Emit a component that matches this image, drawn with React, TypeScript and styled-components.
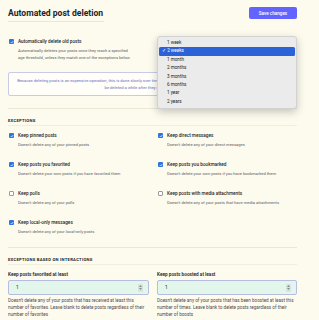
import React from 'react';
import styled, { createGlobalStyle } from 'styled-components';

const GlobalStyle = createGlobalStyle`
  html, body {
    margin: 0;
    padding: 0;
    background: #fdfbee;
  }
  body {
    font-family: Roboto, "Liberation Sans", sans-serif;
    color: #222;
  }
`;

const Page = styled.div`
  width: 289px;
  padding: 6px 0 0 8px;
`;

const Header = styled.header`
  display: flex;
  justify-content: space-between;
  align-items: flex-start;
  margin-bottom: 16px;
`;

const Title = styled.h2`
  margin: 0;
  padding: 2px 1px 3px 0;
  font-size: 8.6px;
  line-height: 10px;
  font-weight: 700;
  color: #1e1f2a;
  border-bottom: 1px solid #ebe8d6;
`;

const SaveButton = styled.button`
  margin-top: 1px;
  width: 48px;
  height: 12px;
  padding: 0;
  border: none;
  border-radius: 2px;
  background: #6364ff;
  color: #fff;
  font-family: inherit;
  font-size: 4.6px;
  font-weight: 500;
`;

const Row = styled.div`
  position: relative;
  display: grid;
  grid-template-columns: 141px 140px;
  column-gap: 8px;
  row-gap: 13px;
`;

const Field = styled.div`
  display: flex;
  flex-direction: column;
`;

const CheckLine = styled.label`
  display: flex;
  align-items: center;
  gap: 4px;
  padding-left: 1px;
  font-size: 4.7px;
  line-height: 7px;
  font-weight: 500;
  color: #1e1f2a;
`;

const Box = styled.span<{ $checked?: boolean }>`
  flex: none;
  width: 5px;
  height: 5px;
  box-sizing: border-box;
  border-radius: 1px;
  display: flex;
  align-items: center;
  justify-content: center;
  background: ${(p) => (p.$checked ? '#2f74e2' : '#fff')};
  border: ${(p) => (p.$checked ? 'none' : '0.6px solid #9a9a9a')};
`;

const Hint = styled.div`
  margin-top: 2px;
  padding-left: 10px;
  font-size: 4.1px;
  line-height: 7px;
  color: #5c5c66;
`;

const InfoBox = styled.div`
  margin-top: 11px;
  padding: 4px 6px 4px;
  border: 1px solid #c9cae8;
  border-radius: 2px;
  background: #fffef9;
  color: #6a6fc2;
  font-size: 4.1px;
  line-height: 7px;
  text-align: center;
`;

const Divider = styled.hr`
  margin: 12px 0 0;
  border: none;
  border-top: 1px solid #ebe8d6;
`;

const SectionTitle = styled.h4`
  margin: 8px 0 6px;
  padding-bottom: 1px;
  font-size: 4.2px;
  line-height: 7px;
  font-weight: 700;
  letter-spacing: 0.25px;
  text-transform: uppercase;
  color: #1e1f2a;
  border-bottom: 1px solid #f0eedd;
`;

const Popup = styled.ul`
  position: absolute;
  top: -2px;
  left: 149px;
  width: 140px;
  margin: 0;
  padding: 2px 1px;
  list-style: none;
  box-sizing: border-box;
  background: #ebebeb;
  border: 0.5px solid #d2d2d2;
  border-radius: 3px;
  box-shadow: 0 3px 8px rgba(0, 0, 0, 0.22);
  z-index: 2;
`;

const Option = styled.li<{ $active?: boolean }>`
  height: 8.4px;
  line-height: 8.4px;
  padding-left: ${(p) => (p.$active ? '3px' : '8px')};
  border-radius: 1.5px;
  font-size: 4.6px;
  color: ${(p) => (p.$active ? '#fff' : '#222')};
  background: ${(p) => (p.$active ? '#2c62d7' : 'transparent')};
`;

const InputLabel = styled.div`
  font-size: 4.7px;
  line-height: 7px;
  font-weight: 600;
  color: #1e1f2a;
  margin-bottom: 2px;
`;

const NumberInput = styled.div`
  display: flex;
  align-items: center;
  justify-content: space-between;
  height: 15px;
  box-sizing: border-box;
  padding: 0 5px 0 7px;
  border: 1px solid #b7bde0;
  border-radius: 2px;
  background: #e2f6ec;
  font-size: 4.8px;
  color: #222;
`;

const Spinner = styled.span`
  display: flex;
  flex-direction: column;
  align-items: center;
  justify-content: center;
  gap: 1px;
  width: 5px;
  height: 8px;
  border-radius: 1px;
  background: #d6e4df;
`;

const InputHint = styled.div`
  margin-top: 2px;
  font-size: 4.6px;
  line-height: 7px;
  color: #4b4b55;
`;

const Tick = () => (
  <svg width="4" height="4" viewBox="0 0 10 10">
    <path d="M2 5.2 L4.2 7.4 L8.2 2.8" fill="none" stroke="#fff" strokeWidth="1.8" />
  </svg>
);

const Check = ({ checked, label, hint }: { checked?: boolean; label: string; hint: string }) => (
  <Field>
    <CheckLine>
      <Box $checked={checked}>{checked && <Tick />}</Box>
      {label}
    </CheckLine>
    <Hint>{hint}</Hint>
  </Field>
);

const ages = ['1 week', '2 weeks', '1 month', '2 months', '3 months', '6 months', '1 year', '2 years'];

const exceptions = [
  { checked: true, label: 'Keep pinned posts', hint: "Doesn't delete any of your pinned posts" },
  { checked: true, label: 'Keep direct messages', hint: "Doesn't delete any of your direct messages" },
  { checked: true, label: 'Keep posts you favorited', hint: "Doesn't delete your own posts if you have favorited them" },
  { checked: true, label: 'Keep posts you bookmarked', hint: "Doesn't delete your own posts if you have bookmarked them" },
  { checked: false, label: 'Keep polls', hint: "Doesn't delete any of your polls" },
  { checked: false, label: 'Keep posts with media attachments', hint: "Doesn't delete any of your posts that have media attachments" },
  { checked: true, label: 'Keep local-only messages', hint: "Doesn't delete any of your local-only posts" },
];

const Stepper = () => (
  <Spinner>
    <svg width="3" height="2" viewBox="0 0 6 4">
      <path d="M0 4 L3 0 L6 4 Z" fill="#8a8f96" />
    </svg>
    <svg width="3" height="2" viewBox="0 0 6 4">
      <path d="M0 0 L3 4 L6 0 Z" fill="#8a8f96" />
    </svg>
  </Spinner>
);

export default function App() {
  return (
    <>
      <GlobalStyle />
      <Page>
        <Header>
          <Title>Automated post deletion</Title>
          <SaveButton>Save changes</SaveButton>
        </Header>

        <Row>
          <Field>
            <CheckLine>
              <Box $checked>
                <Tick />
              </Box>
              Automatically delete old posts
            </CheckLine>
            <Hint>
              Automatically deletes your posts once they reach a specified
              <br />
              age threshold, unless they match one of the exceptions below
            </Hint>
          </Field>
          <Field />
          <Popup>
            {ages.map((a) => (
              <Option key={a} $active={a === '2 weeks'}>
                {a === '2 weeks' ? '✓ ' : ''}
                {a}
              </Option>
            ))}
          </Popup>
        </Row>

        <InfoBox>
          Because deleting posts is an expensive operation, this is done slowly over time when the server is not otherwise busy. For this reason, your posts may be deleted a while after they reach the age threshold.
        </InfoBox>

        <Divider />
        <SectionTitle>Exceptions</SectionTitle>
        <Row>
          {exceptions.map((e) => (
            <Check key={e.label} checked={e.checked} label={e.label} hint={e.hint} />
          ))}
        </Row>

        <Divider />
        <SectionTitle>Exceptions based on interactions</SectionTitle>
        <Row>
          <Field>
            <InputLabel>Keep posts favorited at least</InputLabel>
            <NumberInput>
              1
              <Stepper />
            </NumberInput>
            <InputHint>
              Doesn't delete any of your posts that has received at least this number of favorites. Leave blank to delete posts regardless of their number of favorites
            </InputHint>
          </Field>
          <Field>
            <InputLabel>Keep posts boosted at least</InputLabel>
            <NumberInput>
              1
              <Stepper />
            </NumberInput>
            <InputHint>
              Doesn't delete any of your posts that has been boosted at least this number of times. Leave blank to delete posts regardless of their number of boosts
            </InputHint>
          </Field>
        </Row>
      </Page>
    </>
  );
}
